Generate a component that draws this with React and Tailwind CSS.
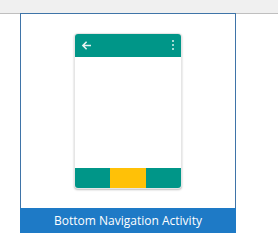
import React from "react";

const PhonePreview = () => {
  return (
    <div className="w-[108px] h-[156px] rounded-[4px] overflow-hidden flex flex-col bg-white border border-[#e6e6e6] shadow-[0_1px_2px_rgba(0,0,0,0.25)]">
      <div className="h-[24px] bg-[#009688] flex items-center justify-between pl-[7px] pr-[8px] -mx-px -mt-px">
        <svg width="11" height="11" viewBox="0 0 11 11">
          <path d="M10 5.5H2M5.6 1.8L1.9 5.5L5.6 9.2" stroke="#e6f4f2" strokeWidth="1.6" fill="none" />
        </svg>
        <div className="flex flex-col gap-[1.5px]">
          <div className="w-[2.5px] h-[2.5px] bg-[#d9efec] rounded-full"></div>
          <div className="w-[2.5px] h-[2.5px] bg-[#d9efec] rounded-full"></div>
          <div className="w-[2.5px] h-[2.5px] bg-[#d9efec] rounded-full"></div>
        </div>
      </div>
      <div className="flex-1"></div>
      <div className="h-[21px] flex -mx-px -mb-px">
        <div className="flex-1 bg-[#009688]"></div>
        <div className="flex-1 bg-[#ffc107]"></div>
        <div className="flex-1 bg-[#009688]"></div>
      </div>
    </div>
  );
};

const App = () => {
  return (
    <div className="w-[278px] h-[251px] bg-white" style={{ fontFamily: "'Open Sans', 'Noto Sans', sans-serif" }}>
      <div className="h-[14px] bg-[#f0f0f0] border-b border-[#bfbfbf]"></div>
      <div className="ml-[20px] w-[216px] border-x border-[#3f74a8] -mt-px border-t">
        <div className="h-[194px] flex justify-center pt-[19px]">
          <PhonePreview />
        </div>
      </div>
      <div className="ml-[20px] w-[216px] h-[25px] bg-[#1e7ac6] text-white text-[12px] flex items-center justify-center">
        Bottom Navigation Activity
      </div>
    </div>
  );
};

export default App;
